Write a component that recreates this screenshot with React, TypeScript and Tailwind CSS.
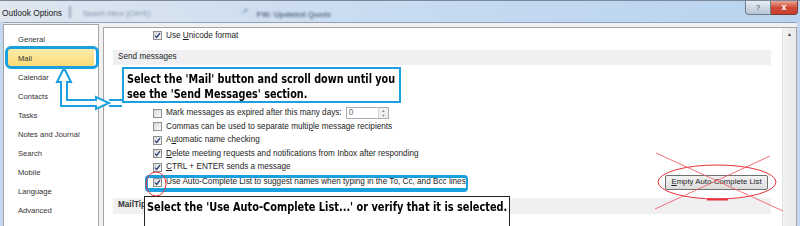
import React from "react";

const ui = "font-['Liberation_Sans',Arial,sans-serif]";
const note = "font-['Liberation_Sans_Narrow','DejaVu_Sans_Condensed',sans-serif]";

function Box({ checked }: { checked?: boolean }) {
  return (
    <span className="flex h-[9px] w-[9px] shrink-0 items-center justify-center border border-[#8e8f8f] bg-gradient-to-br from-[#d8d8d8] to-[#fbfbfb]">
      {checked && (
        <svg width="7" height="7" viewBox="0 0 7 7">
          <path d="M1 3.6 L2.7 5.4 L6 1.2" fill="none" stroke="#2b3f7c" strokeWidth="1.3" />
        </svg>
      )}
    </span>
  );
}

function Row({ checked, children, tall }: { checked?: boolean; children: React.ReactNode; tall?: boolean }) {
  return (
    <div className={`flex items-center pl-[40px] ${tall ? "h-[16px]" : "h-[13.5px]"}`}>
      <Box checked={checked} />
      <span className="ml-[4px] whitespace-nowrap">{children}</span>
    </div>
  );
}

const nav = [
  "General",
  "Mail",
  "Calendar",
  "Contacts",
  "Tasks",
  "Notes and Journal",
  "Search",
  "Mobile",
  "Language",
  "Advanced",
];

export default function App() {
  return (
    <div className={`relative h-[226px] w-[800px] overflow-hidden bg-[#c3d7ee] text-[7.6px] leading-none text-[#1e1e1e] ${ui}`}>
      {/* title bar */}
      <div className="flex h-[22px] items-start border-t border-[#7b8899] bg-gradient-to-r from-[#dfe6ee] via-[#c7dbf1] to-[#b9d3ef]">
        <span className="mt-[8px] pl-[2px] text-[8.4px] text-[#1b1b1b]">Outlook Options</span>
        <span className="ml-[7px] mt-[5px] h-[12px] w-[2px] bg-[#9aa9bb] blur-[1px]" />
        <span className="ml-[12px] mt-[9px] text-[7px] text-[#7d8fa6] blur-[1px]">Search Inbox (Ctrl+E)</span>
        <span className="ml-[90px] mt-[6px] text-[9px] text-[#6d8bb0] blur-[1px]">&#8599;</span>
        <span className="ml-[8px] mt-[10px] text-[8px] font-bold text-[#5e6f86] blur-[1.2px]">FW: Updated Quote</span>
        <div className="ml-auto flex">
          <div className="flex h-[14px] w-[26px] items-center justify-center rounded-bl-[4px] border border-t-0 border-[#6f7c8c] bg-gradient-to-b from-[#e6edf5] to-[#b9c6d5] text-[8px] text-[#4b5563]">
            ?
          </div>
          <div className="mr-[2px] flex h-[14px] w-[27px] items-center justify-center rounded-br-[4px] border border-l-0 border-t-0 border-[#7a3a34] bg-gradient-to-b from-[#e8a496] via-[#cf4b37] to-[#c7402d] text-[9px] font-bold text-white">
            x
          </div>
        </div>
      </div>

      {/* body */}
      <div className="mx-[3px] flex h-[204px] gap-[4px] border-t border-[#8ea3bd] bg-[#f0f0f0]">
        <div className="mt-[1px] w-[96px] border border-b-0 border-[#a5a5a5] bg-white pt-[5px] text-[#333]">
          {nav.map((n) => (
            <div
              key={n}
              className={`mx-[4px] flex h-[19px] items-center pl-[10px] ${
                n === "Mail" ? "bg-gradient-to-b from-[#fdeca8] to-[#fbd972]" : ""
              }`}
            >
              {n}
            </div>
          ))}
        </div>

        <div className="mt-[4px] flex flex-1 border border-b-0 border-[#a5a5a5] bg-white text-[8.2px]">
          <div className="flex-1 pl-[9px] pr-[11px] pt-[1px]">
            <Row checked>
              Use <span className="underline">U</span>nicode format
            </Row>
            <div className="mt-[7px] flex h-[15px] items-center bg-[#f0f0f3] pl-[5px]">Send messages</div>
            <div className="h-[42px]" />
            <div className="flex h-[13.5px] items-center pl-[40px]">
              <Box />
              <span className="ml-[4px] whitespace-nowrap">Mark messages as expired after this many days:</span>
              <div className="ml-[4px] flex h-[12px] w-[43px] border border-[#abadb3]">
                <span className="flex flex-1 items-center pl-[2px] text-[#6d6d6d]">0</span>
                <div className="flex w-[10px] flex-col border-l border-[#d5d5d5] bg-[#f0f0f0]">
                  <span className="flex flex-1 items-center justify-center text-[4px] text-[#8a8a8a]">&#9650;</span>
                  <span className="flex flex-1 items-center justify-center text-[4px] text-[#8a8a8a]">&#9660;</span>
                </div>
              </div>
            </div>
            <Row>
              Commas can be used to separate multi<span className="underline">p</span>le message recipients
            </Row>
            <Row checked>
              A<span className="underline">u</span>tomatic name checking
            </Row>
            <Row checked>
              <span className="underline">D</span>elete meeting requests and notifications from Inbox after responding
            </Row>
            <Row checked>
              <span className="underline">C</span>TRL + ENTER sends a message
            </Row>
            <div className="flex h-[16px] items-center">
              <Row checked tall>
                Use Auto-Complete List to suggest names when typing in the To, Cc, and Bcc lines
              </Row>
              <button className="ml-auto mr-[3px] flex h-[15px] w-[103px] items-center justify-center rounded-[2px] border border-[#707070] bg-gradient-to-b from-[#f4f4f4] to-[#dcdcdc] text-[7.8px] text-[#1e1e1e]">
                <span className="underline">E</span>mpty Auto-Complete List
              </button>
            </div>
            <div className="mt-[7.5px] flex h-[16px] items-center bg-[#f0f0f3] pl-[5px] font-bold text-[#333]">MailTips</div>
          </div>
          <div className="flex w-[14px] flex-col items-center border-l border-[#e3e3e3] bg-gradient-to-r from-[#f2f2f2] to-[#e9e9e9] pt-[4px]">
            <span className="text-[5px] text-[#444]">&#9650;</span>
          </div>
        </div>
      </div>

      {/* annotations */}
      <div className="pointer-events-none absolute left-[5px] top-[46px] h-[23px] w-[94px] rounded-[6px] border-[3px] border-[#1a9fe0]" />

      <div className={`absolute left-[122px] top-[67px] h-[36px] w-[279px] overflow-hidden border-2 border-[#1a9fe0] bg-white pl-[3px] pt-[2px] text-[12.5px] font-bold leading-[15px] text-black ${note}`}>
        <div className="w-[330px] origin-top-left scale-x-[0.86] whitespace-nowrap">
          Select the 'Mail' button and scroll down until you
          <br />
          see the 'Send Messages' section.
        </div>
      </div>

      <div className="pointer-events-none absolute left-[145px] top-[175px] h-[17px] w-[323px] rounded-[4px] border-[3px] border-b-4 border-r-2 border-[#1a9fe0]" />

      <div className={`absolute left-[144px] top-[196px] h-[40px] w-[366px] overflow-hidden border border-[#222] bg-white pl-[2px] pt-[4px] text-[12.5px] font-bold text-black ${note}`}>
        <div className="w-[420px] origin-top-left scale-x-[0.87] whitespace-nowrap">
          Select the 'Use Auto-Complete List...' or verify that it is selected.
        </div>
      </div>

      <svg className="pointer-events-none absolute left-0 top-0" width="800" height="226" viewBox="0 0 800 226">
        <path
          d="M64 68 L71 82 L67 82 L67 100 L96 100 L96 97 L109 103 L96 109 L96 106 L61 106 L61 82 L57 82 Z"
          fill="white"
          stroke="#1a9fe0"
          strokeWidth="2"
          strokeLinejoin="miter"
        />
        <path d="M109 100 L122 100 M109 106 L122 106" stroke="#1a9fe0" strokeWidth="2" />
        <ellipse cx="156" cy="184" rx="10" ry="12" fill="none" stroke="#e8303a" strokeWidth="1" />
        <ellipse cx="717" cy="182" rx="59" ry="17" fill="none" stroke="#e8303a" strokeWidth="1" />
        <path d="M707 199.5 L728 199.5" stroke="#e8303a" strokeWidth="2" />
        <path d="M656 153 L783 211 M770 156 L655 209" stroke="#f05a64" strokeWidth="1" opacity="0.85" />
      </svg>
    </div>
  );
}
